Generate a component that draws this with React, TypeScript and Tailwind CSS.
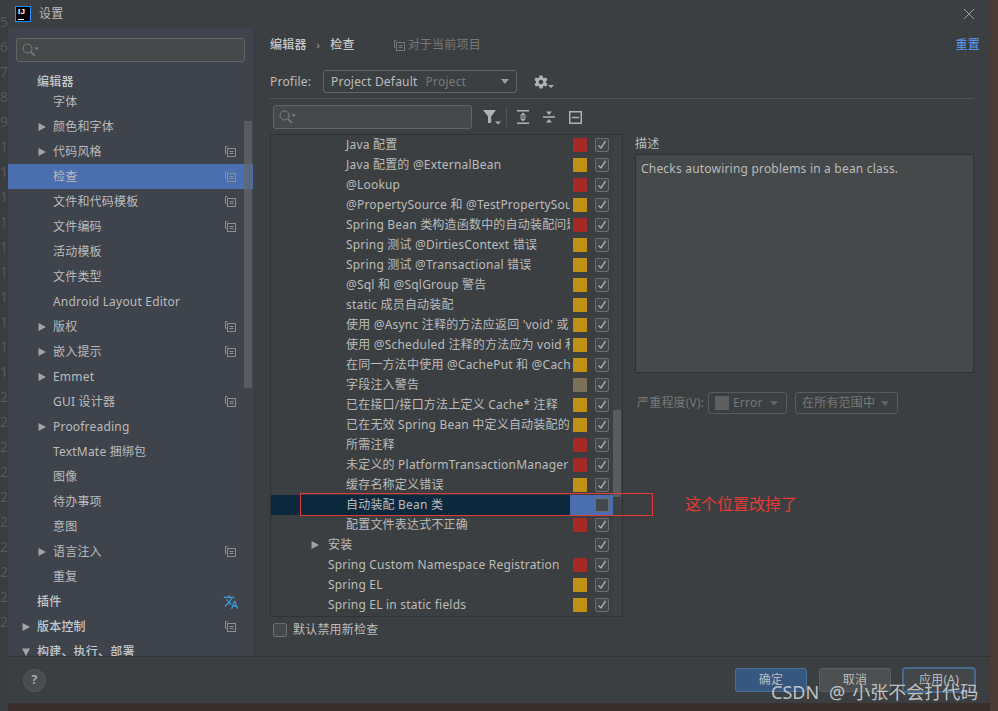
import { MdTranslate } from 'react-icons/md';
import { IoMdSettings } from 'react-icons/io';

const RED = 'bg-[#a32a26]';
const YELLOW = 'bg-[#bf9014]';
const MUTED = 'bg-[#7a7158]';

type SideRow = {
  label: string;
  level: 0 | 1;
  arrow?: 'right' | 'down';
  project?: boolean;
  translate?: boolean;
  selected?: boolean;
};

const sideRows: SideRow[] = [
  { label: '字体', level: 1 },
  { label: '颜色和字体', level: 1, arrow: 'right' },
  { label: '代码风格', level: 1, arrow: 'right', project: true },
  { label: '检查', level: 1, project: true, selected: true },
  { label: '文件和代码模板', level: 1, project: true },
  { label: '文件编码', level: 1, project: true },
  { label: '活动模板', level: 1 },
  { label: '文件类型', level: 1 },
  { label: 'Android Layout Editor', level: 1 },
  { label: '版权', level: 1, arrow: 'right', project: true },
  { label: '嵌入提示', level: 1, arrow: 'right', project: true },
  { label: 'Emmet', level: 1, arrow: 'right' },
  { label: 'GUI 设计器', level: 1, project: true },
  { label: 'Proofreading', level: 1, arrow: 'right' },
  { label: 'TextMate 捆绑包', level: 1 },
  { label: '图像', level: 1 },
  { label: '待办事项', level: 1 },
  { label: '意图', level: 1 },
  { label: '语言注入', level: 1, arrow: 'right', project: true },
  { label: '重复', level: 1 },
  { label: '插件', level: 0, translate: true },
  { label: '版本控制', level: 0, arrow: 'right', project: true },
  { label: '构建、执行、部署', level: 0, arrow: 'down' },
];

type TreeRow = { label: string; color?: string; indent?: 'deep' | 'mid'; arrow?: boolean; selected?: boolean };

const treeRows: TreeRow[] = [
  { label: 'Java 配置', color: RED },
  { label: 'Java 配置的 @ExternalBean', color: YELLOW },
  { label: '@Lookup', color: RED },
  { label: '@PropertySource 和 @TestPropertySource', color: YELLOW },
  { label: 'Spring Bean 类构造函数中的自动装配问题', color: RED },
  { label: 'Spring 测试 @DirtiesContext 错误', color: YELLOW },
  { label: 'Spring 测试 @Transactional 错误', color: YELLOW },
  { label: '@Sql 和 @SqlGroup 警告', color: YELLOW },
  { label: 'static 成员自动装配', color: YELLOW },
  { label: "使用 @Async 注释的方法应返回 'void' 或", color: YELLOW },
  { label: '使用 @Scheduled 注释的方法应为 void 和', color: YELLOW },
  { label: '在同一方法中使用 @CachePut 和 @Cacheable', color: YELLOW },
  { label: '字段注入警告', color: MUTED },
  { label: '已在接口/接口方法上定义 Cache* 注释', color: YELLOW },
  { label: '已在无效 Spring Bean 中定义自动装配的', color: YELLOW },
  { label: '所需注释', color: RED },
  { label: '未定义的 PlatformTransactionManager', color: RED },
  { label: '缓存名称定义错误', color: YELLOW },
  { label: '自动装配 Bean 类', selected: true },
  { label: '配置文件表达式不正确', color: RED },
  { label: '安装', indent: 'mid', arrow: true },
  { label: 'Spring Custom Namespace Registration', color: RED, indent: 'mid' },
  { label: 'Spring EL', color: YELLOW, indent: 'mid' },
  { label: 'Spring EL in static fields', color: YELLOW, indent: 'mid' },
];

const gutter = ['5', '6', '7', '8', '9', '10', '11', '12', '13', '14', '15', '16', '17', '18', '19', '20', '21', '22', '23', '24', '25', '26', '27', '28', '29'];

function Triangle({ down = false }: { down?: boolean }) {
  return (
    <svg width="10" height="10" viewBox="0 0 10 10" className="text-[#a0a4a8]">
      <path d={down ? 'M1 1.5h8L5 9z' : 'M1.5 1l7.5 4-7.5 4z'} fill="currentColor" />
    </svg>
  );
}

function ProjectIcon({ className = 'text-[#8b8f93]' }: { className?: string }) {
  return (
    <svg width="11" height="11" viewBox="0 0 11 11" fill="none" stroke="currentColor" className={className}>
      <path d="M2.5.5h-2v7h1" />
      <rect x="2.5" y="2.5" width="8" height="8" />
      <path d="M4.5 5.5h4M4.5 7.5h4" />
    </svg>
  );
}

function SearchIcon() {
  return (
    <svg width="18" height="14" viewBox="0 0 18 14" fill="none" className="text-[#7d8185]">
      <circle cx="5.5" cy="5.5" r="4.5" stroke="currentColor" />
      <path d="M9 9l4 4" stroke="currentColor" strokeWidth="1.3" />
      <path d="M12.5 4.5h4.5l-2.25 2.5z" fill="currentColor" />
    </svg>
  );
}

function Checkbox({ checked = true }: { checked?: boolean }) {
  return (
    <span className="flex h-[14px] w-[14px] items-center justify-center rounded-[2px] border border-[#6b6e70] bg-[#43494a]">
      {checked && (
        <svg width="10" height="10" viewBox="0 0 10 10" fill="none">
          <path d="M1.5 5.5L4 8l4.5-7" stroke="#a9adb0" strokeWidth="1.4" />
        </svg>
      )}
    </span>
  );
}

function Sidebar() {
  return (
    <aside className="relative flex h-full w-[245px] shrink-0 flex-col overflow-hidden bg-[#3e434c]">
      <div className="px-2 pt-[10px]">
        <div className="flex h-6 w-[229px] items-center rounded-[3px] border border-[#646464] bg-[#45494a] pl-[5px]">
          <SearchIcon />
        </div>
      </div>
      <div className="mt-[13px] flex h-[14px] items-center pl-[29px] font-medium text-[#c4c7ca]">编辑器</div>
      <div className="flex flex-col">
        {sideRows.map((row) => (
          <div
            key={row.label}
            className={`flex h-[25px] shrink-0 items-center pr-[17px] ${row.selected ? 'bg-[#4b6eaf]' : ''} ${
              row.level === 0 ? 'pl-[13px] font-medium' : 'pl-[29px]'
            }`}
          >
            <span className="flex w-4 shrink-0 items-center">
              {row.arrow && <Triangle down={row.arrow === 'down'} />}
            </span>
            <span className={`flex-1 whitespace-nowrap ${row.level === 0 ? 'text-[#c4c7ca]' : 'text-[#bbbbbb]'}`}>
              {row.label}
            </span>
            {row.project && <ProjectIcon />}
            {row.translate && <MdTranslate className="mr-[-3px] text-[#389fd6]" size={16} />}
          </div>
        ))}
      </div>
      <div className="absolute right-[1px] top-[93px] h-[267px] w-2 bg-[#62666c]/70" />
    </aside>
  );
}

function TreeRowView({ row }: { row: TreeRow }) {
  return (
    <div className={`flex h-5 shrink-0 items-center ${row.selected ? 'bg-[#0d293e]' : ''}`}>
      <div
        className={`flex min-w-0 flex-1 items-center overflow-hidden whitespace-nowrap ${
          row.indent === 'mid' ? 'pl-[57px]' : 'pl-[75px]'
        }`}
      >
        {row.arrow && (
          <span className="ml-[-18px] w-[18px] shrink-0">
            <Triangle />
          </span>
        )}
        <span>{row.label}</span>
      </div>
      <div className={`flex h-5 w-[52px] shrink-0 items-center ${row.selected ? 'bg-[#4b6eaf]' : ''}`}>
        <span className={`ml-[3px] h-[14px] w-[14px] ${row.color ?? ''}`} />
        <span className="ml-2">
          <Checkbox checked={!row.selected} />
        </span>
      </div>
    </div>
  );
}

function Toolbar() {
  return (
    <div className="ml-[3px] mt-[6px] flex items-center">
      <div className="flex h-6 w-[199px] items-center rounded-[3px] border border-[#646464] bg-[#45494a] pl-[5px]">
        <SearchIcon />
      </div>
      <svg width="18" height="16" viewBox="0 0 18 16" className="ml-[11px] text-[#afb1b3]">
        <path d="M0 1h13L8.2 7.5V14H5V7.5z" fill="currentColor" />
        <path d="M12 12.5h6L15 15.5z" fill="currentColor" />
      </svg>
      <div className="ml-[5px] h-5 w-px bg-[#515355]" />
      <svg width="14" height="14" viewBox="0 0 14 14" className="ml-[9px] text-[#afb1b3]" fill="currentColor">
        <path d="M1 0h12v1.5H1zM1 12.5h12V14H1zM7 2.5L10 5.5H4zM7 11.5L4 8.5h6zM4 6.5h6v1H4z" />
      </svg>
      <svg width="14" height="14" viewBox="0 0 14 14" className="ml-[12px] text-[#afb1b3]" fill="currentColor">
        <path d="M1 6.2h12v1.5H1zM7 5L4 1.5h6zM7 9l3 3.5H4z" />
      </svg>
      <svg width="13" height="13" viewBox="0 0 13 13" fill="none" stroke="currentColor" className="ml-[13px] text-[#afb1b3]">
        <rect x="0.75" y="0.75" width="11.5" height="11.5" strokeWidth="1.5" />
        <path d="M3 6.5h7" strokeWidth="1.5" />
      </svg>
    </div>
  );
}

function TreePanel() {
  return (
    <div className="relative mt-[5px] h-[483px] w-[353px] shrink-0 overflow-hidden border border-[#323232]">
      <div className="flex flex-col text-[#bbbbbb]">
        {treeRows.map((row) => (
          <TreeRowView key={row.label} row={row} />
        ))}
      </div>
      <div className="absolute right-0 top-0 h-full w-[9px] bg-[#3f4244]" />
      <div className="absolute right-[1px] top-[275px] h-[87px] w-2 bg-[#595c5e]" />
    </div>
  );
}

function DescriptionPanel() {
  return (
    <div className="ml-[12px] flex w-[339px] flex-col">
      <div className="mt-[-3px] h-[20px] leading-[19px] text-[#bbbbbb]">描述</div>
      <div className="h-[219px] border border-[#323232] bg-[#45494a] px-[5px] py-[4px] text-[#bbbbbb]">
        Checks autowiring problems in a bean class.
      </div>
      <div className="mt-[19px] flex items-center text-[#777777]">
        <span className="ml-[2px] w-[71px] whitespace-nowrap">严重程度(V):</span>
        <div className="flex h-[22px] w-[79px] items-center rounded-[3px] border border-[#585b5d] pl-[6px]">
          <span className="h-[14px] w-[14px] bg-[#5f5f5f]" />
          <span className="ml-[4px] flex-1">Error</span>
          <span className="mr-[8px] h-0 w-0 border-x-[4px] border-t-[5px] border-x-transparent border-t-[#5f6366]" />
        </div>
        <div className="ml-[8px] flex h-[22px] w-[103px] items-center rounded-[3px] border border-[#585b5d] pl-[6px]">
          <span className="flex-1 whitespace-nowrap">在所有范围中</span>
          <span className="mr-[8px] h-0 w-0 border-x-[4px] border-t-[5px] border-x-transparent border-t-[#5f6366]" />
        </div>
      </div>
    </div>
  );
}

function MainPane() {
  return (
    <main className="flex min-w-0 flex-1 flex-col pl-[17px] pr-[16px]">
      <div className="mt-[7px] flex h-5 items-center">
        <span className="font-medium text-[#c4c7ca]">编辑器</span>
        <span className="mx-[10px] text-[11px] text-[#9a9da0]">›</span>
        <span className="font-medium text-[#c4c7ca]">检查</span>
        <span className="ml-[39px] flex items-center gap-[3px] text-[#787878]">
          <ProjectIcon className="text-[#787878]" />
          对于当前项目
        </span>
        <span className="ml-auto mr-[-6px] text-[#589df6]">重置</span>
      </div>
      <div className="mt-[15px] flex items-center">
        <span className="w-[53px] text-[#bbbbbb]">Profile:</span>
        <div className="flex h-[23px] w-[194px] items-center rounded-[3px] border border-[#646464] pl-[7px]">
          <span className="whitespace-nowrap text-[#bbbbbb]">Project Default</span>
          <span className="ml-2 flex-1 text-[#787878]">Project</span>
          <span className="mr-[7px] h-0 w-0 border-x-[4.5px] border-t-[5px] border-x-transparent border-t-[#9a9da0]" />
        </div>
        <IoMdSettings size={16} className="ml-[16px] text-[#afb1b3]" />
        <span className="ml-[-1px] mt-[10px] h-0 w-0 border-x-[3px] border-t-[3px] border-x-transparent border-t-[#afb1b3]" />
      </div>
      <div className="mt-[5px] h-px bg-[#515151]" />
      <Toolbar />
      <div className="flex items-start">
        <TreePanel />
        <div className="mt-[8px]">
          <DescriptionPanel />
        </div>
      </div>
      <div className="ml-[3px] mt-[3px] flex items-center gap-[6px] text-[#bbbbbb]">
        <span className="h-[14px] w-[14px] rounded-[2px] border border-[#6b6e70] bg-[#43494a]" />
        默认禁用新检查
      </div>
    </main>
  );
}

function Footer() {
  return (
    <footer className="flex h-[47px] shrink-0 items-center border-t border-[#323232] bg-[#3c3f41] pl-[15px] pr-[14px]">
      <span className="flex h-[23px] w-[23px] items-center justify-center rounded-full border border-[#55585a] bg-[#4a4d4f] font-bold text-[#a9abad]">
        ?
      </span>
      <div className="ml-auto flex items-center">
        <button className="h-6 w-[72px] rounded-[3px] border border-[#4c708c] bg-[#365880] text-[#bbbbbb]">确定</button>
        <button className="ml-[12px] h-6 w-[72px] rounded-[3px] border border-[#5e6060] bg-[#4c5052] text-[#bbbbbb]">取消</button>
        <button className="ml-[11px] h-[26px] w-[74px] rounded-[4px] border-2 border-[#46698f] bg-[#43474a] text-[#bbbbbb]">应用(A)</button>
      </div>
    </footer>
  );
}

export default function App() {
  return (
    <div
      className="relative flex h-[711px] w-[998px] overflow-hidden bg-[#3a2f2c] text-[12px] leading-5 tracking-[0.2px]"
      style={{ fontFamily: '"Noto Sans", "Noto Sans CJK SC", sans-serif' }}
    >
      <div className="flex w-2 shrink-0 flex-col overflow-hidden bg-[#3a3d40] pt-[12px] text-[#55585a]">
        {gutter.map((n) => (
          <span key={n} className="h-[25px] shrink-0 whitespace-nowrap text-[14px]">
            {n}
          </span>
        ))}
      </div>
      <div className="flex h-[703px] w-[982px] shrink-0 flex-col bg-[#3c3f41]">
        <header className="flex h-7 shrink-0 items-center pl-[7px] pr-[15px] text-[#bbbbbb]">
          <span className="flex h-4 w-4 flex-col justify-between border border-[#1f8fff] bg-black px-[2px] pb-[1px] font-['Liberation_Sans'] text-[8px] font-bold leading-[9px] text-white">
            IJ
            <span className="h-px w-[6px] bg-white" />
          </span>
          <span className="ml-2">设置</span>
          <svg width="12" height="12" viewBox="0 0 12 12" className="ml-auto text-[#9a9da0]" stroke="currentColor">
            <path d="M1 1l10 10M11 1L1 11" />
          </svg>
        </header>
        <div className="flex min-h-0 flex-1">
          <Sidebar />
          <MainPane />
        </div>
        <Footer />
      </div>
      <div className="flex-1 bg-[#4a3d36]" />
      <div className="absolute left-[300px] top-[493px] h-[23px] w-[353px] border border-[#e53935]" />
      <span className="absolute left-[685px] top-[494px] text-[16px] tracking-normal text-[#e53935]">这个位置改掉了</span>
      <span className="absolute left-[771px] top-[682px] flex whitespace-nowrap text-[18px] leading-5 tracking-normal text-[#d0d2d4]/90">
        <span>CSDN</span>
        <span className="ml-[10px]">@</span>
        <span className="ml-[7px]">小张不会打代码</span>
      </span>
    </div>
  );
}
